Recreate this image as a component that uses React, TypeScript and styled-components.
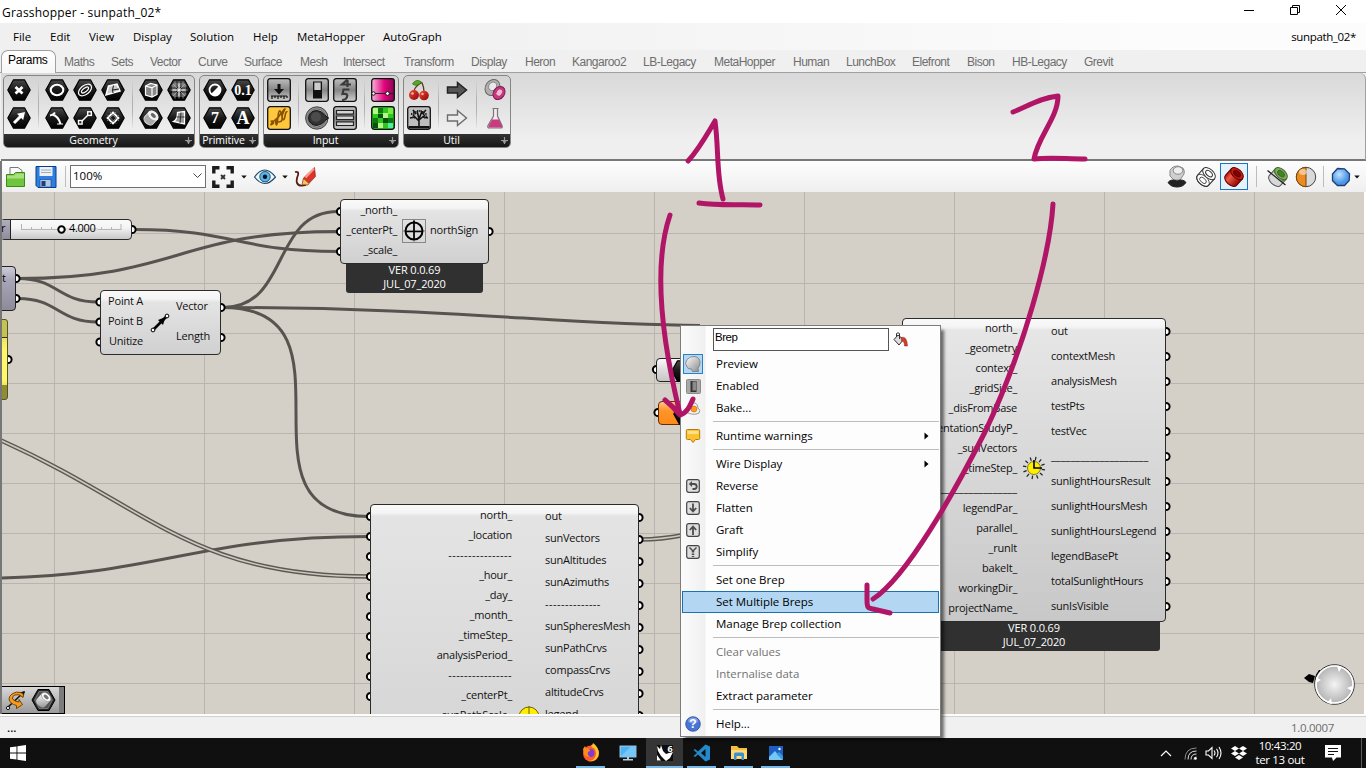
import React from 'react';
import styled, { createGlobalStyle, css } from 'styled-components';

const UI = "'Open Sans', 'Noto Sans', sans-serif";
const INK = '#b01566';

const Global = createGlobalStyle`
  * { box-sizing: border-box; }
  html, body { margin: 0; padding: 0; }
  body { width: 1366px; height: 768px; overflow: hidden; font-family: ${UI}; font-size: 11.5px; color: #000; background: #f0f0f0; }
  svg { display: block; }
`;

const Screen = styled.div`
  position: relative;
  width: 1366px;
  height: 768px;
  overflow: hidden;
  display: flex;
  flex-direction: column;
  > * { min-height: 0; }
`;

/* ---------- title and menu ---------- */
const TitleBar = styled.header`
  flex: 0 0 23px;
  display: flex;
  justify-content: space-between;
  background: #fff;
  padding: 0 19px 0 2px;
  font-size: 12px;
  line-height: 25px;
  letter-spacing: 0.2px;
  white-space: nowrap;
`;
const WindowButtons = styled.div`
  display: flex;
  gap: 34px;
  padding-top: 4px;
`;
const MenuBar = styled.nav`
  flex: 0 0 27px;
  display: flex;
  padding-left: 13px;
  background: linear-gradient(90deg, #f0f0f0 0, #f0f0f0 25%, #fcfcfc 85%);
  line-height: 28px;
`;
const MenuItem = styled.span<{ $w: number }>`
  flex: 0 0 ${p => p.$w}px;
  white-space: nowrap;
`;
const DocName = styled.span`
  margin-left: auto;
  padding-right: 10px;
  letter-spacing: -0.35px;
  white-space: nowrap;
`;

/* ---------- ribbon ---------- */
const TabRow = styled.div`
  flex: 0 0 23px;
  display: flex;
  padding-left: 1px;
  background: #f0f0f0;
  font-family: 'Liberation Sans', sans-serif;
  font-size: 12px;
  letter-spacing: -0.5px;
  color: #6e6e6e;
  border-bottom: 1px solid #a0a0a0;
`;
const ActiveTab = styled.span`
  flex: 0 0 55px;
  height: 23px;
  padding-left: 6px;
  line-height: 19px;
  letter-spacing: -0.3px;
  color: #000;
  background: linear-gradient(#fff, #f6f6f6);
  border: 1px solid #a0a0a0;
  border-bottom: 0;
  border-radius: 7px 7px 0 0;
`;
const Tab = styled.span<{ $w: number }>`
  flex: 0 0 ${p => p.$w}px;
  line-height: 24px;
  white-space: nowrap;
`;
const TabList = styled.div`
  display: flex;
  padding-left: 8px;
`;
const Ribbon = styled.div`
  flex: 0 0 88px;
  display: flex;
  gap: 4px;
  padding: 2px 0 0 2px;
  margin-left: 1px;
  background: linear-gradient(#d9d9d9, #efefef 78%);
  border-right: 1px solid #a0a0a0;
  border-bottom: 2px solid #777;
  border-top-right-radius: 6px;
`;
const Group = styled.section`
  height: 73px;
  display: flex;
  flex-direction: column;
  border: 1px solid #858585;
  border-radius: 5px;
  overflow: hidden;
  background: linear-gradient(#d3d3d3, #f0f0f0 80%);
`;
const GroupIcons = styled.div`
  flex: 0 0 58px;
  display: flex;
  padding: 0 1px;
`;
const IconGrid = styled.div`
  display: grid;
  grid-template-rows: 28px 28px;
  grid-auto-columns: 28px;
  grid-auto-flow: column;
  place-items: center;
`;
const GroupRule = styled.i`
  flex: 0 0 10px;
  display: flex;
  justify-content: center;
  &::after { content: ''; width: 1px; margin: 4px 0; background: linear-gradient(transparent, #b0b0b0 40%, #b0b0b0 60%, transparent); }
`;
const GroupLabel = styled.div`
  flex: 1;
  display: flex;
  justify-content: center;
  position: relative;
  background: linear-gradient(#333, #161616);
  color: #fff;
  font-size: 10.5px;
  letter-spacing: -0.05px;
  line-height: 12px;
  padding-right: 11px;
`;
const GroupPlus = styled.svg`
  position: absolute;
  right: 2px;
  top: 3px;
`;

/* ---------- toolbar ---------- */
const Toolbar = styled.div`
  flex: 0 0 31px;
  display: flex;
  align-items: center;
  padding: 0 4px 0 3px;
  border-left: 2px solid #777;
  background: linear-gradient(#fdfdfd, #efefef);
`;
const Combo = styled.div`
  width: 136px;
  height: 23px;
  display: flex;
  align-items: center;
  justify-content: space-between;
  margin-right: 3px;
  padding: 0 3px 2px 2px;
  background: #fff;
  border: 1px solid #707070;
`;
const ToolRule = styled.i<{ $l: number; $r: number }>`
  width: 1px;
  height: 21px;
  margin: 0 ${p => p.$r}px 0 ${p => p.$l}px;
  background: #bdbdbd;
`;
const Spacer = styled.div`flex: 1;`;
const Tool = styled.span<{ $w?: number; $on?: boolean }>`
  width: ${p => p.$w || 29}px;
  height: 27px;
  display: flex;
  align-items: center;
  justify-content: center;
  ${p => p.$on && css`width: 28px; border: 1px solid #1874c8; background: #e5f1fb;`}
`;

/* ---------- canvas ---------- */
const CanvasFrame = styled.main`
  flex: 0 0 522px;
  position: relative;
  overflow: hidden;
  border-left: 2px solid #777;
  border-right: 2px solid #fff;
  background-color: #d4d0c8;
  background-image:
    repeating-linear-gradient(90deg, transparent 0 52px, #b9b5ae 52px 53px, transparent 53px 150px),
    repeating-linear-gradient(180deg, transparent 0 41px, #b9b5ae 41px 42px, transparent 42px 50px);
`;
const Wires = styled.svg`
  position: absolute;
  left: 0;
  top: 0;
`;
const NodeBox = styled.div<{ $x: number; $y: number; $w: number; $h: number; $flat?: boolean }>`
  position: absolute;
  left: ${p => p.$x - 2}px;
  top: ${p => p.$y - 192}px;
  width: ${p => p.$w}px;
  height: ${p => p.$h}px;
  display: flex;
  border: 1px solid #2b2b2b;
  border-radius: 4px;
  background: linear-gradient(#fafafa 0, #f4f4f4 8px, #e6e6e6 11px, #c8c8c8);
  ${p => p.$flat && css`background: linear-gradient(#fafafa 0, #f4f4f4 8px, #e4e4e4 11px, #d0d0d0);`}
`;
const Inputs = styled.div<{ $w: number; $up?: boolean }>`
  flex: 0 0 ${p => p.$w}px;
  margin-top: ${p => (p.$up ? -1 : 0)}px;
  display: flex;
  flex-direction: column;
  align-items: flex-end;
`;
const Outputs = styled.div`
  display: flex;
  flex-direction: column;
  align-items: flex-start;
`;
const Port = styled.span<{ $h: number; $ls: number }>`
  flex: 0 0 ${p => p.$h}px;
  line-height: ${p => p.$h - 1}px;
  font-size: 11px;
  letter-spacing: ${p => p.$ls}px;
  color: #111;
  white-space: nowrap;
`;
const NodeIcon = styled.div<{ $w: number; $pt: number }>`
  flex: 0 0 ${p => p.$w}px;
  display: flex;
  justify-content: center;
  padding-top: ${p => p.$pt}px;
`;
const VersionTag = styled.div<{ $x: number; $y: number; $w: number }>`
  position: absolute;
  left: ${p => p.$x - 2}px;
  top: ${p => p.$y - 192}px;
  width: ${p => p.$w}px;
  height: 30px;
  border-radius: 0 0 3px 3px;
  background: #303030;
  color: #fff;
  font-size: 11px;
  letter-spacing: -0.15px;
  line-height: 14px;
  text-align: center;
  white-space: nowrap;
`;
const SliderName = styled.div`
  width: 10px;
  border-right: 1px solid #222;
  background: linear-gradient(#b0aebb, #8f8d9b);
  font-size: 11px;
  line-height: 16px;
`;
const SliderTrack = styled.div`
  flex: 1;
  display: flex;
  font-size: 11px;
  line-height: 17px;
`;
const YellowPanel = styled.div`
  position: absolute;
  left: -10px;
  top: 127px;
  width: 16px;
  height: 81px;
  border: 1px solid #55531f;
  border-radius: 3px;
  background: linear-gradient(#c4c252 0 17px, #33320f 17px 18px, #e9e466 18px, #fff76c 30px, #fff76c 60px, #eee75c 65px, #8f8c33 65px);
`;
const HalfNode = styled.div<{ $x: number; $y: number; $orange?: boolean }>`
  position: absolute;
  left: ${p => p.$x - 2}px;
  top: ${p => p.$y - 192}px;
  width: 50px;
  height: 24px;
  padding-left: 14px;
  border: 1px solid ${p => (p.$orange ? '#6b2a00' : '#222')};
  border-radius: 4px;
  background: ${p => (p.$orange ? 'linear-gradient(#ffc48a, #ff9429 40%, #fb8a1a)' : 'linear-gradient(#fafafa, #dedede 45%, #c6c6c6)')};
`;
const StubNode = styled.div`
  position: absolute;
  left: -10px;
  top: 74px;
  width: 24px;
  height: 45px;
  padding-left: 9px;
  border: 1px solid #222;
  border-radius: 4px;
  background: linear-gradient(#cfcdd9, #a8a6b6 30%, #8d8b9b);
  font-size: 11px;
  line-height: 21px;
`;
const Markov = styled.div`
  position: absolute;
  left: -1px;
  top: 494px;
  width: 64px;
  height: 28px;
  display: flex;
  align-items: center;
  gap: 5px;
  padding-left: 4px;
  border: 1px solid #000;
  background: linear-gradient(90deg, transparent 57px, #7c7c7c 57px), linear-gradient(#d8d8d8, #9a9a9a);
`;
const Compass = styled.svg`
  position: absolute;
  left: 1298px;
  top: 468px;
`;

/* ---------- status + taskbar ---------- */
const StatusBar = styled.footer`
  flex: 0 0 24px;
  display: flex;
  justify-content: space-between;
  padding: 0 32px 0 7px;
  border-top: 2px solid #fdfdfd;
  box-shadow: inset 0 1px 0 #d0d0d0;
  background: #f0f0f0;
  line-height: 24px;
  letter-spacing: -0.3px;
  color: #6d6d6d;
`;
const Dots = styled.span`
  color: #000;
  font-weight: 600;
  letter-spacing: 0;
`;
const Taskbar = styled.div`
  flex: 0 0 30px;
  display: flex;
  padding-left: 573px;
  background: #101010;
  position: relative;
  color: #fff;
`;
const StartButton = styled.div`
  position: absolute;
  left: 10px;
  top: 7px;
`;
const TaskApps = styled.div`
  display: flex;
  margin-left: -1px;
`;
const TaskApp = styled.div<{ $on?: boolean; $idle?: boolean }>`
  width: 37px;
  display: flex;
  justify-content: center;
  padding: 5px 0 0;
  background: ${p => (p.$on ? '#353535' : 'transparent')};
  box-shadow: ${p => (p.$idle ? 'none' : 'inset 0 -2px 0 #76b9ed')};
  ${p => !p.$on && css`width: 29px; margin: 0 4px;`}
`;
const Tray = styled.div`
  margin-left: auto;
  display: flex;
  align-items: center;
  padding-right: 4px;
`;
const TrayCell = styled.div<{ $w: number }>`
  width: ${p => p.$w}px;
  display: flex;
  justify-content: center;
`;
const Clock = styled.div`
  width: 56px;
  font-size: 11.5px;
  line-height: 14px;
  letter-spacing: -0.35px;
  text-align: center;
  white-space: nowrap;
`;
const ShowDesktop = styled.i`
  width: 1px;
  height: 30px;
  margin-left: 3px;
  background: #5a5a5a;
`;

/* ---------- context menu ---------- */
const Popup = styled.div`
  position: absolute;
  left: 680px;
  top: 325px;
  width: 261px;
  height: 412px;
  padding: 2px 1px;
  border: 1px solid #7c7c7c;
  background: linear-gradient(90deg, #fbfbfb 0, #f0f0f0 24px, #fdfdfd 25px);
  box-shadow: 4px 4px 3px -1px rgba(0, 0, 0, 0.55);
`;
const PopupSearch = styled.div`
  height: 25px;
  display: flex;
  padding: 0 0 0 31px;
  gap: 4px;
`;
const PopupInput = styled.div`
  width: 176px;
  height: 23px;
  padding-left: 1px;
  border: 1px solid #555;
  background: #fff;
  font-family: 'Liberation Sans', sans-serif;
  font-size: 11.5px;
  letter-spacing: -0.5px;
  line-height: 17px;
`;
const PopupRow = styled.div<{ $hot?: boolean; $off?: boolean }>`
  height: 22px;
  display: flex;
  align-items: center;
  padding-right: 10px;
  line-height: 20px;
  letter-spacing: -0.02px;
  color: ${p => (p.$off ? '#737373' : '#000')};
  ${p => p.$hot && css`background: #b3d7f3; box-shadow: inset 0 0 0 1px #1c72b0;`}
`;
const PopupGlyph = styled.span<{ $on?: boolean }>`
  flex: 0 0 20px;
  height: 20px;
  margin: 0 13px 0 1px;
  display: flex;
  align-items: center;
  justify-content: center;
  ${p => p.$on && css`background: #b3d7f3; border: 1px solid #2a80c4;`}
`;
const PopupText = styled.span`
  flex: 1;
  white-space: nowrap;
`;
const PopupRule = styled.i`
  display: block;
  height: 6px;
  margin-left: 31px;
  background: linear-gradient(transparent 2px, #bdbdbd 2px 3px, transparent 3px);
`;
const Ink = styled.svg`
  position: absolute;
  left: 0;
  top: 0;
  pointer-events: none;
`;

/* ---------- ribbon icons ---------- */
const DefsSvg = styled.svg`
  position: absolute;
`;
const Defs = () => (
  <DefsSvg width="0" height="0">
    <defs>
      <linearGradient id="hex" x1="0" y1="0" x2="0" y2="1"><stop offset="0" stopColor="#4a4a4a" /><stop offset=".5" stopColor="#181818" /><stop offset="1" stopColor="#000" /></linearGradient>
      <linearGradient id="steel" x1="0" y1="0" x2="0" y2="1"><stop offset="0" stopColor="#bdbdbd" /><stop offset=".5" stopColor="#868686" /><stop offset="1" stopColor="#d0d0d0" /></linearGradient>
      <linearGradient id="pink" x1="0" y1="0" x2="1" y2="0"><stop offset="0" stopColor="#f7b6da" /><stop offset=".55" stopColor="#e2057c" /><stop offset="1" stopColor="#8b0450" /></linearGradient>
      <linearGradient id="red" x1="0" y1="0" x2="1" y2="1"><stop offset="0" stopColor="#f0483a" /><stop offset="1" stopColor="#8e0500" /></linearGradient>
      <linearGradient id="redtube" x1="0" y1="0" x2="1" y2="0"><stop offset="0" stopColor="#c01008" /><stop offset=".3" stopColor="#ee5a48" /><stop offset="1" stopColor="#8e0500" /></linearGradient>
      <linearGradient id="tube" x1="0" y1="0" x2="1" y2="1"><stop offset="0" stopColor="#fff" /><stop offset="1" stopColor="#8a8a8a" /></linearGradient>
      <radialGradient id="knob"><stop offset="0" stopColor="#f4f4f4" /><stop offset="1" stopColor="#b0b0b0" /></radialGradient>
      <radialGradient id="ball" cx=".4" cy=".35"><stop offset="0" stopColor="#bfe2ff" /><stop offset="1" stopColor="#4f97e6" /></radialGradient>
    </defs>
  </DefsSvg>
);

const Hex = ({ children }: { children?: React.ReactNode }) => (
  <svg width="24" height="24" viewBox="0 0 24 24">
    <path d="M6.5 1.8h11L23.2 12l-5.7 10.2h-11L.8 12z" fill="url(#hex)" stroke="#000" strokeWidth="1.2" strokeLinejoin="round" />
    <g fill="none" stroke="#fff" strokeWidth="1.8">{children}</g>
  </svg>
);
const Tile = ({ fill, children }: { fill: string; children?: React.ReactNode }) => (
  <svg width="24" height="24" viewBox="0 0 24 24">
    <rect x=".7" y=".7" width="22.6" height="22.6" rx="2.5" fill={fill} stroke="#111" strokeWidth="1.3" />
    {children}
  </svg>
);
const Plain = ({ children }: { children?: React.ReactNode }) => (
  <svg width="24" height="24" viewBox="0 0 24 24">{children}</svg>
);

const GeometryIcons = () => (
  <>
    <IconGrid>
      <Hex><path d="M8.5 9l7 6.5M15.5 9l-7 6.5" strokeWidth="2.8" /></Hex>
      <Hex><path d="M7 17l6.500-6.500" strokeWidth="3" /><path d="M18 6l-1.800 8-6.200-6.200z" fill="#fff" stroke="none" /></Hex>
    </IconGrid>
    <GroupRule />
    <IconGrid>
      <Hex><ellipse cx="12" cy="12" rx="6.300" ry="5.200" strokeWidth="2.100" /></Hex>
      <Hex><path d="M10 6.500q-1.500 2.500-5 3M7 8.500q6 1 8.500 9.500" strokeWidth="2" /><path d="M12 18h6" strokeWidth="1.200" /></Hex>
      <Hex><g transform="rotate(-38 12 12)"><ellipse cx="12" cy="12" rx="7.500" ry="4.500" strokeWidth="1.200" /><ellipse cx="12" cy="12" rx="4.200" ry="1.800" strokeWidth="1.200" /></g></Hex>
      <Hex><path d="M8 16l8-8" strokeWidth="1.500" /><rect x="5.500" y="14.500" width="3.600" height="3.600" fill="#222" strokeWidth="1.400" /><rect x="14.700" y="5.800" width="3.600" height="3.600" fill="#222" strokeWidth="1.400" /></Hex>
      <Hex><path d="M7.500 8l8.500-1.800 3 6.800L5 17z" fill="#ccc" strokeWidth="1.500" /><path d="M12.500 7.500l-1 4.500 6.500-1M11.500 12l.5 3" stroke="#222" strokeWidth="1.100" /></Hex>
      <Hex><path d="M12 6.500l5.500 5.500-5.500 5.500L6.500 12z" strokeWidth="1.800" /><path d="M6 8.500l9 9M9 6l9 9M15 6l-9 9M18 9l-9 9" stroke="#999" strokeWidth=".7" /></Hex>
    </IconGrid>
    <GroupRule />
    <IconGrid>
      <Hex><path d="M6.500 8l5-2.500 6.500 1.500v9.500l-5 2.500-6.500-2z" fill="#888" strokeWidth="1.200" /><path d="M6.500 8l6.500 1.800V19M13 9.800l5-2.800" strokeWidth="1.200" /></Hex>
      <Hex><g transform="rotate(42 12 12)"><path d="M6.500 8.500v7a5.500 3.500 0 0 0 11 0v-7z" fill="#aaa" stroke="#ddd" strokeWidth="1" /><ellipse cx="12" cy="8.500" rx="5.500" ry="3.500" fill="#eee" strokeWidth="1" /><ellipse cx="12" cy="8.500" rx="3" ry="1.700" fill="#666" stroke="none" /></g></Hex>
      <Hex><path d="M6 6h12v12H6zM12 3.500v17M3.500 12h17M6 6l12 12M18 6L6 18M8 3.500v17M16 3.500v17M4.500 8h15M4.500 16h15" stroke="#bbb" strokeWidth=".7" /><path d="M12 5.500v13M5.500 12h13" strokeWidth="1" /></Hex>
      <Hex><path d="M10.500 6.500l7-1V18L6.500 15.500q4-2 4-9z" fill="#999" strokeWidth="1.300" /><path d="M14 6.500L13 17M9.500 11h8" stroke="#333" strokeWidth="1" /></Hex>
    </IconGrid>
  </>
);

const HexText = ({ t, s }: { t: string; s: number }) => (
  <Hex><text x="12" y={12 + s * 0.34} textAnchor="middle" fontFamily="'Liberation Serif', serif" fontWeight="700" fontSize={s} fill="#fff" stroke="none">{t}</text></Hex>
);

const PrimitiveIcons = () => (
  <IconGrid>
    <Hex><circle cx="12" cy="12" r="5.500" /><path d="M16 8a5.600 5.600 0 1 1-8 8z" fill="#fff" stroke="none" /></Hex>
    <HexText t="7" s={16} />
    <HexText t="0.1" s={14} />
    <HexText t="A" s={18} />
  </IconGrid>
);

const InputIcons = () => (
  <>
    <IconGrid>
      <Tile fill="url(#steel)"><path d="M10.500 6h3v5H17l-5 5.500L7 11h3.500z" fill="#111" /><path d="M4 18h16M5 18v3M8 18v2M11 18v3M14 18v2M17 18v3M20 18v2" stroke="#111" strokeWidth="1.200" /></Tile>
      <Tile fill="#ffc83c"><path d="M3.500 15.500q2.500-1 3 .5t-2 2.500 3.500-4.500 3-2.500-2 6.500 2-7 3.500-3-2.500 8 1.500-8 3.500-3-1.500 8 2.500-3 2.500-4" fill="none" stroke="#8a5200" strokeWidth="1.600" /></Tile>
    </IconGrid>
    <GroupRule />
    <IconGrid>
      <Tile fill="url(#steel)"><rect x="8" y="3.500" width="9" height="17" fill="#111" /><rect x="9.300" y="4.500" width="6.400" height="7.500" fill="#ccc" /></Tile>
      <Plain><circle cx="11.800" cy="12" r="11.200" fill="#8f8f8f" stroke="#444" /><circle cx="11.800" cy="12" r="9" fill="#bdbdbd" stroke="#555" strokeWidth=".7" /><path d="M11 4.600q5.500 0 8.500 4.400l4 3-4 3q-3 4.400-8.500 4.400a7.400 7.400 0 0 1 0-14.800z" fill="#333" stroke="#111" /><circle cx="11" cy="11" r="5" fill="#4c4c4c" /></Plain>
      <Tile fill="url(#steel)"><path d="M14.500 1.500L9 6.500h9M14.500 2v7M16.500 11.500h-6l-1 4.500q6-1 4.500 3-1 3-5 3" stroke="#3a3a3a" strokeWidth="2.200" fill="none" /></Tile>
      <Tile fill="url(#steel)"><path d="M3.500 4.500h17v3.600h-17zM3.500 10h17v3.600h-17zM3.500 15.800h17v3.700h-17z" fill="#d6d6d6" stroke="#222" strokeWidth="1.200" /></Tile>
    </IconGrid>
    <GroupRule />
    <IconGrid>
      <Tile fill="url(#pink)"><path d="M1 15.500h22" stroke="#222" strokeWidth="1.200" /><circle cx="2.500" cy="15.500" r="1.700" fill="#fff" stroke="#111" /><circle cx="16.500" cy="15.500" r="1.900" fill="#fff" stroke="#111" /></Tile>
      <Tile fill="#2cc81e"><path d="M2 2h5v6H2zM12 7h5v5h-5zM7 17h5v5H7z" fill="#b8f58a" /><path d="M7 2h5v5H7zM2 12h5v5H2zM17 12h5v5h-5z" fill="#0e7a12" /><path d="M12 12h5v5h-5zM2 17h5v5H2zM7 8h5v4H7z" fill="#0a5010" /><path d="M17 2h5v6h-5z" fill="#7be84a" /><path d="M17 17h5v5h-5z" fill="#4ff0a0" /></Tile>
    </IconGrid>
  </>
);

const ARROW = 'M2.500 9h10V4.500L21.500 12l-9 7.500V15h-10z';
const UtilIcons = () => (
  <>
    <IconGrid>
      <Plain><path d="M15 4.500Q8 8 7 13M15 4.500q2 5 2 9" stroke="#5c3b12" fill="none" strokeWidth="1.300" /><path d="M14.500 4Q9 0 5.500 6q5 3.500 9-2z" fill="#58a827" stroke="#2d6512" strokeWidth=".7" /><circle cx="7" cy="17" r="5" fill="url(#red)" /><circle cx="17" cy="17.500" r="4.800" fill="url(#red)" /><circle cx="5.500" cy="15.500" r="1.300" fill="#ffb3a8" /><circle cx="15.500" cy="16" r="1.200" fill="#ffb3a8" /></Plain>
      <Tile fill="#bdbdbd"><path d="M1.500 20h21v2.500h-21z" fill="#111" /><path d="M12 21v-8M12 15L6 9M12 14l6-5M12 13l-2-8M12 13l3-8M8 11L3 12M16 11l5 1M9 8L6 4M15 8l4-4" stroke="#111" strokeWidth="1.600" /><path d="M4 8h4M16 8h4M10 5h5M6 6h3M15 6h3M5 11l3 1M17 12l3-2" stroke="#222" strokeWidth="1.800" strokeDasharray="1.400 .8" /></Tile>
    </IconGrid>
    <GroupRule />
    <IconGrid>
      <Plain><path d={ARROW} fill="#555" stroke="#222" strokeWidth="1.500" /></Plain>
      <Plain><path d={ARROW} fill="#ececec" stroke="#6c6c6c" strokeWidth="1.400" /></Plain>
    </IconGrid>
    <GroupRule />
    <IconGrid>
      <Plain><g transform="rotate(35 9.500 9.500)"><ellipse cx="9.500" cy="9.500" rx="7" ry="8.500" fill="#b0b0b0" stroke="#666" /><ellipse cx="9" cy="8.500" rx="3.800" ry="4.500" fill="#e9e9e9" stroke="#777" strokeWidth=".7" /></g><g transform="rotate(35 16 15)"><ellipse cx="16" cy="15" rx="5.500" ry="7" fill="#c9387f" stroke="#7d1a4c" /><ellipse cx="16" cy="14.500" rx="3" ry="4" fill="#f8b6d4" stroke="#a32968" strokeWidth=".8" /></g></Plain>
      <Plain><path d="M9.500 2.500h6M10.500 3v7L5 19.500q-1 2.500 1.500 2.500h11q2.500 0 1.500-2.500L14.500 10V3" fill="#f6e6ee" stroke="#777" strokeWidth="1.200" /><path d="M9 13.500h7l3 6.500q.5 1.500-1.500 1.500H7q-2 0-1.500-1.500z" fill="#c93a80" /></Plain>
    </IconGrid>
  </>
);

const RibbonGroup = ({ name, children }: { name: string; children: React.ReactNode }) => (
  <Group>
    <GroupIcons>{children}</GroupIcons>
    <GroupLabel>
      {name}
      <GroupPlus width="7" height="7" viewBox="0 0 7 7"><path d="M3.500 0v7M0 3.500h7" stroke="#999" strokeWidth="1.200" /><path d="M1.500 4l2 3 2-3z" fill="#999" /></GroupPlus>
    </GroupLabel>
  </Group>
);

/* ---------- toolbar icons ---------- */
const Caret = () => <svg width="6" height="4" viewBox="0 0 6 4"><path d="M.3.500h5.400L3 3.500z" fill="#111" /></svg>;

const Cylinder = ({ kind }: { kind: 'wire' | 'red' | 'green' }) => {
  const body = { wire: '#fff', red: 'url(#redtube)', green: '#d8d8d8' }[kind];
  const line = { wire: '#333', red: '#5e0200', green: '#555' }[kind];
  const cap = { wire: '#fff', red: '#c81b12', green: '#6fbe35' }[kind];
  const hole = { wire: '#fff', red: '#7e0400', green: '#3b8a18' }[kind];
  return (
    <svg width="24" height="24" viewBox="0 0 24 24">
      <g transform="rotate(42 12 12)" stroke={line}>
        <path d="M4.500 7.500v9a7.500 4.500 0 0 0 15 0v-9z" fill={body} />
        {kind === 'wire' && <><ellipse cx="12" cy="16.500" rx="7.500" ry="4.500" fill="none" strokeWidth=".8" /><ellipse cx="12" cy="16.500" rx="4" ry="2.300" fill="none" strokeWidth=".8" /></>}
        {kind === 'green' && <path d="M5 8v3.500l14 1V8z" fill="#4f9e22" stroke="none" />}
        <ellipse cx="12" cy="7.500" rx="7.500" ry="4.500" fill={cap} />
        <ellipse cx="12" cy="7.500" rx="4" ry="2.300" fill={hole} />
      </g>
      {kind === 'green' && <path d="M1.500 5.500L19.500 20" stroke="#222" strokeWidth="1.300" />}
    </svg>
  );
};

/* ---------- canvas data ---------- */
const sunInputs = ['north_', '_location', '----------------', '_hour_', '_day_', '_month_', '_timeStep_', 'analysisPeriod_', '----------------', '_centerPt_', '_sunPathScale_'];
const sunOutputs = ['out', 'sunVectors', 'sunAltitudes', 'sunAzimuths', '--------------', 'sunSpheresMesh', 'sunPathCrvs', 'compassCrvs', 'altitudeCrvs', 'legend'];
const hrsInputs = ['north_', '_geometry', 'context_', '_gridSize_', '_disFromBase', 'orientationStudyP_', '_sunVectors', '_timeStep_', '____________________', 'legendPar_', 'parallel_', '_runIt', 'bakeIt_', 'workingDir_', 'projectName_'];
const hrsOutputs = ['out', 'contextMesh', 'analysisMesh', 'testPts', 'testVec', '____________________', 'sunlightHoursResult', 'sunlightHoursMesh', 'sunlightHoursLegend', 'legendBasePt', 'totalSunlightHours', 'sunIsVisible'];

const spacing = (t: string) => (t.startsWith('--') ? 0.45 : t.startsWith('__') ? 0.05 : -0.23);
const Ports = ({ names, h }: { names: string[]; h: number }) => (
  <>{names.map((t, i) => <Port key={i} $h={h} $ls={spacing(t)}>{t}</Port>)}</>
);

const seq = (x: number, y: number, step: number, n: number) => Array.from({ length: n }, (_, i) => [x, y + i * step]);
const ports = [
  [132, 229.5], [16, 278.5], [16, 298.5], [8, 359.5],
  ...seq(100, 302, 20, 3), [221, 307.5], [221, 337.5],
  ...seq(340.5, 211.5, 20, 3), [489, 231.5],
  ...seq(370.5, 516.5, 20, 10), ...seq(639, 517.5, 22, 10),
  ...seq(1166, 331.5, 25, 12),
  [656.5, 369.5], [658, 412.5],
];
const wires = [
  'M134 229.5C236 229.5 236 251.5 338 251.5',
  'M18 278.5C178 278.5 178 231.5 338 231.5',
  'M18 278.5C58 278.5 58 302 98 302',
  'M18 298.5C58 298.5 58 322 98 322',
  'M223 307.5C290 307.5 271 211.5 338 211.5',
  'M223 307.5C450 307.5 560 325 700 325.5',
  'M223 307.5C369 307.5 223 516.5 369 516.5',
  'M2 578C160 574 200 536.5 369 536.5',
];
const doubleWires = ['M0 440C150 507 190 576.5 369 576.5', 'M641 539.5C657 539.5 668 538 684 535'];

const Drawing = () => (
  <Wires width="1362" height="522" viewBox="2 192 1362 522">
    <g fill="none" stroke="#57544f" strokeWidth="3">{wires.map(d => <path key={d} d={d} />)}</g>
    <g fill="none">{doubleWires.map(d => <g key={d}><path d={d} stroke="#5c5953" strokeWidth="4.5" /><path d={d} stroke="#cdc9c1" strokeWidth="1.6" /></g>)}</g>
    <g fill="#fff" stroke="#000" strokeWidth="2">{ports.map(([x, y]) => <circle key={`${x}-${y}`} cx={x} cy={y} r="3.6" />)}</g>
  </Wires>
);

const Rays = () => (
  <svg width="24" height="24" viewBox="0 0 24 24">
    {Array.from({ length: 12 }, (_, i) => <path key={i} d="M12 .8v3.400" stroke="#222" strokeWidth="1.2" transform={`rotate(${i * 30 + 10} 12 12)`} />)}
    <circle cx="12" cy="12" r="6.500" fill="#ffee00" stroke="#6b6400" strokeWidth=".8" />
    <path d="M12 4v8h8" fill="none" stroke="#000" strokeWidth="1.600" />
  </svg>
);

/* ---------- context menu ---------- */
const Box = ({ children }: { children: React.ReactNode }) => (
  <svg width="14" height="14" viewBox="0 0 14 14"><rect x=".7" y=".7" width="12.600" height="12.600" rx="2" fill="#dedede" stroke="#444" strokeWidth="1.200" /><g fill="none" stroke="#4c4c4c" strokeWidth="1.800">{children}</g></svg>
);
const glyphs: Record<string, React.ReactNode> = {
  Preview: <svg width="18" height="18" viewBox="0 0 18 18"><path d="M3 4.500Q6 1 11 1.500q5 1 5 6.500 0 3-2 5l.5 3.500H8.500l-1-2.500q-4 .500-4.500-2.500L1.500 8.500z" fill="url(#tube)" stroke="#777" strokeWidth=".8" /></svg>,
  Enabled: <svg width="15" height="15" viewBox="0 0 15 15"><rect x=".5" y=".5" width="14" height="14" rx="1" fill="#a8a8a8" stroke="#8a8a8a" /><rect x="4.500" y="2" width="6" height="11" fill="#333" /><rect x="6.500" y="2.500" width="3.500" height="9" fill="#8a8a8a" /></svg>,
  'Bake...': <svg width="16" height="16" viewBox="0 0 16 16"><path d="M1 12q-1-4 4-5 1-5 5-4 3 1 3 5 3 2 1 5-6 3-13-1z" fill="#f4f4f4" stroke="#999" /><circle cx="9" cy="9" r="3" fill="#ff9a1f" stroke="#c86400" strokeWidth=".6" /></svg>,
  'Runtime warnings': <svg width="16" height="16" viewBox="0 0 16 16"><path d="M2.500 1.500h11q1.200 0 1.200 1.200v7.600q0 1.200-1.200 1.200h-3L8 14.500l-2.500-3h-3q-1.200 0-1.200-1.200V2.700q0-1.200 1.200-1.200z" fill="#ffc22e" stroke="#b07d10" /><path d="M2.500 3h11v3h-11z" fill="#ffe08a" /></svg>,
  Reverse: <Box><path d="M5 5h3.200a2.400 2.400 0 0 1 0 5H6.500" /><path d="M6 2L2.800 5 6 8z" fill="#4c4c4c" stroke="none" /></Box>,
  Flatten: <Box><path d="M7 2.500v7M3.800 7L7 10.500 10.200 7" /></Box>,
  Graft: <Box><path d="M7 12V5M3.800 7L7 3.500 10.200 7" /></Box>,
  Simplify: <Box><path d="M3.500 2.500L7 6l3.500-3.500" strokeWidth="1.500" /><path d="M7 6v6" strokeDasharray="1.500 1" strokeWidth="2.500" /></Box>,
  'Help...': <svg width="16" height="16" viewBox="0 0 16 16"><circle cx="8" cy="8" r="7.300" fill="#4a74d4" stroke="#2a4a9c" strokeWidth=".8" /><ellipse cx="8" cy="4.500" rx="5" ry="3" fill="#9db8f3" opacity=".6" /><text x="8" y="12.300" fontSize="12" fontWeight="700" textAnchor="middle" fill="#fff" fontFamily="'Liberation Sans', sans-serif">?</text></svg>,
};
const entries = ['Preview', 'Enabled', 'Bake...', '', 'Runtime warnings', '', 'Wire Display', 'Reverse', 'Flatten', 'Graft', 'Simplify', '', 'Set one Brep', 'Set Multiple Breps', 'Manage Brep collection', '', 'Clear values', 'Internalise data', 'Extract parameter', '', 'Help...'];

const ContextMenu = () => (
  <Popup>
    <PopupSearch>
      <PopupInput>Brep</PopupInput>
      <svg width="16" height="24" viewBox="0 0 16 24"><path d="M1 11.500l4-4.500 5.500 4.500L6 17z" fill="#ddd" stroke="#333" /><path d="M3.500 9V5.500q1.500-1.500 3 0V11" fill="none" stroke="#333" /><path d="M8 9.500q6-2 6.500 8.500h-3q0-5-3-5z" fill="#cf3d2c" stroke="#8e2418" strokeWidth=".5" /></svg>
    </PopupSearch>
    {entries.map((t, i) => t === '' ? <PopupRule key={i} /> : (
      <PopupRow key={i} $hot={t === 'Set Multiple Breps'} $off={t === 'Clear values' || t === 'Internalise data'}>
        <PopupGlyph $on={t === 'Preview'}>{glyphs[t]}</PopupGlyph>
        <PopupText>{t}</PopupText>
        {(t === 'Runtime warnings' || t === 'Wire Display') && <svg width="5" height="8" viewBox="0 0 5 8"><path d="M.5.500L4.500 4l-4 3.500z" fill="#000" /></svg>}
      </PopupRow>
    ))}
  </Popup>
);

/* ---------- page ---------- */
const menus: [string, number][] = [['File', 37], ['Edit', 39], ['View', 44], ['Display', 57], ['Solution', 63], ['Help', 44], ['MetaHopper', 86], ['AutoGraph', 70]];
const tabs: [string, number][] = [['Maths', 47], ['Sets', 39], ['Vector', 48], ['Curve', 46], ['Surface', 56], ['Mesh', 43], ['Intersect', 61], ['Transform', 67], ['Display', 54], ['Heron', 47], ['Kangaroo2', 71], ['LB-Legacy', 71], ['MetaHopper', 79], ['Human', 53], ['LunchBox', 66], ['Elefront', 55], ['Bison', 45], ['HB-Legacy', 72], ['Grevit', 40]];

export default function App() {
  return (
    <Screen>
      <Global />
      <Defs />
      <TitleBar>
        <span>Grasshopper - sunpath_02*</span>
        <WindowButtons>
          <svg width="12" height="12" viewBox="0 0 12 12"><path d="M1 6.500h10" stroke="#000" /></svg>
          <svg width="12" height="12" viewBox="0 0 12 12"><path d="M1.500 3.500h7v7h-7zM3.500 3.500v-2h7v7h-2" fill="none" stroke="#000" /></svg>
          <svg width="12" height="12" viewBox="0 0 12 12"><path d="M1 1l10 10M11 1L1 11" stroke="#000" /></svg>
        </WindowButtons>
      </TitleBar>
      <MenuBar>
        {menus.map(([t, w]) => <MenuItem key={t} $w={w}>{t}</MenuItem>)}
        <DocName>sunpath_02*</DocName>
      </MenuBar>
      <TabRow>
        <ActiveTab>Params</ActiveTab>
        <TabList>{tabs.map(([t, w]) => <Tab key={t} $w={w}>{t}</Tab>)}</TabList>
      </TabRow>
      <Ribbon>
        <RibbonGroup name="Geometry"><GeometryIcons /></RibbonGroup>
        <RibbonGroup name="Primitive"><PrimitiveIcons /></RibbonGroup>
        <RibbonGroup name="Input"><InputIcons /></RibbonGroup>
        <RibbonGroup name="Util"><UtilIcons /></RibbonGroup>
      </Ribbon>
      <Toolbar>
        <Tool $w={22}><svg width="22" height="22" viewBox="0 0 22 22"><path d="M5 1.500h8l4 3V15H5z" fill="#fafafa" stroke="#777" /><path d="M1.500 8.500h7l2-2h9v14h-18z" fill="#6fc63c" stroke="#3c8a17" /><path d="M2 9.500h7l2-2h8v5H2z" fill="#a7e07c" /></svg></Tool>
        <Tool $w={38}><svg width="22" height="22" viewBox="0 0 22 22"><path d="M1 .500h20v21H3l-2-2z" fill="#2f7fe0" stroke="#0b3c8c" /><path d="M4.500 1h13v9h-13z" fill="#e9f1fb" /><path d="M6 4h10M6 6.500h10" stroke="#aaa" /><path d="M5 13.500h11V21H5z" fill="#b4c7e2" stroke="#0b3c8c" strokeWidth=".6" /><path d="M6.500 15h4v5h-4z" fill="#183f7c" /></svg></Tool>
        <ToolRule $l={0} $r={4} />
        <Combo>100%<svg width="9" height="6" viewBox="0 0 9 6"><path d="M.500.500l4 4 4-4" fill="none" stroke="#444" /></svg></Combo>
        <Tool $w={28}><svg width="22" height="22" viewBox="0 0 22 22"><path d="M1.800 7.500V1.800h5.700M14.500 1.800h5.700v5.700M20.200 14.500v5.700h-5.700M7.500 20.200H1.800v-5.700" fill="none" stroke="#1c1c1c" strokeWidth="3.400" /><path d="M9 9l4 4M13 9l-4 4" stroke="#333" strokeWidth="1.800" /></svg></Tool>
        <Tool $w={13}><Caret /></Tool>
        <Tool $w={30}><svg width="22" height="16" viewBox="0 0 22 16"><path d="M.500 8q10-14 21 0-11 13-21 0z" fill="#eaf5fc" stroke="#234a66" strokeWidth="1.200" /><circle cx="11" cy="7.700" r="5.200" fill="#5cb4e6" stroke="#17557f" /><circle cx="11" cy="7.700" r="2.200" fill="#06121c" /></svg></Tool>
        <Tool $w={9}><Caret /></Tool>
        <Tool $w={32}><svg width="22" height="20" viewBox="0 0 22 20"><path d="M1 5q4-1 3 3-2 5-1 8 2 4 9 2" fill="none" stroke="#5c1c10" strokeWidth="1.800" /><path d="M20.500.500l1 9-8 8.500-5-1 1-6z" fill="#d9352b" stroke="#8a150c" strokeWidth=".6" /><path d="M9.500 11.500L8 17.500l6 .5 1-1.500z" fill="#f4c55e" stroke="#6b3b10" strokeWidth=".5" /><path d="M20 1.500l-8.500 9" stroke="#ff9a8e" strokeWidth="2" /></svg></Tool>
        <Spacer />
        <Tool><svg width="22" height="24" viewBox="0 0 22 24"><path d="M4 5.500Q6 1 12 1l5 2q2 3 1 6l-4 6H8L4 11z" fill="#cfcfcf" stroke="#888" /><ellipse cx="12" cy="5.500" rx="4.800" ry="3.800" fill="#eee" stroke="#888" /><path d="M2 17.500q3-4 9-1.500 6-2.500 9 1.500-3 4.500-9 4.500t-9-4.500z" fill="#222" stroke="#222" /></svg></Tool>
        <Tool><Cylinder kind="wire" /></Tool>
        <Tool $on><Cylinder kind="red" /></Tool>
        <ToolRule $l={8} $r={7} />
        <Tool $w={28}><Cylinder kind="green" /></Tool>
        <Tool $w={28}><svg width="22" height="22" viewBox="0 0 22 22"><circle cx="11" cy="11" r="9.700" fill="#d9d9d9" stroke="#444" /><path d="M11 1.300a9.700 9.700 0 0 0 0 19.400z" fill="#ec8b22" stroke="#7a4208" /><ellipse cx="8" cy="6" rx="4" ry="3" fill="#fff" opacity=".5" /></svg></Tool>
        <ToolRule $l={3} $r={6} />
        <Tool $w={21}><svg width="20" height="20" viewBox="0 0 20 20"><path d="M6.500 1.500L13.500 1.800l5 5-.3 6.700-4.700 5H6.500l-5-4.800V7z" fill="url(#ball)" stroke="#1c3f78" strokeWidth="1.300" /></svg></Tool>
        <Tool $w={11}><Caret /></Tool>
      </Toolbar>

      <CanvasFrame>
        <Drawing />
        <NodeBox $x={0} $y={219} $w={132} $h={21}>
          <SliderName>r</SliderName>
          <SliderTrack><svg width="120" height="19" viewBox="11 220 120 19"><path d="M21 229.500h100M21.500 224v6M31.500 227v3M41.500 227v3M51.500 227v3M101.500 227v3M111.500 227v3M121 224v6" stroke="#b5b5b5" /><path d="M66 229.500h32" stroke="#dedede" strokeWidth="3" /><circle cx="61.500" cy="229.500" r="3.200" fill="#fff" stroke="#000" strokeWidth="2" /><text x="69" y="232" fontSize="11" letterSpacing="-.3" fontFamily={UI}>4.000</text></svg></SliderTrack>
        </NodeBox>
        <StubNode>t</StubNode>
        <YellowPanel />

        <NodeBox $x={100} $y={290} $w={121} $h={65} $flat>
          <Inputs $w={42}><Ports names={['Point A', 'Point B', 'Unitize']} h={20} /></Inputs>
          <NodeIcon $w={33} $pt={22}><svg width="20" height="20" viewBox="0 0 20 20"><path d="M3 17L17 3" stroke="#000" strokeWidth="2.600" /><path d="M15.500 4l-2.500 8-5-5z" fill="#000" /><circle cx="3" cy="17" r="1.900" fill="#fff" stroke="#000" /><circle cx="17" cy="3" r="1.900" fill="#fff" stroke="#000" /></svg></NodeIcon>
          <Outputs><Ports names={['Vector', 'Length']} h={30} /></Outputs>
        </NodeBox>

        <VersionTag $x={346} $y={263} $w={137}>VER 0.0.69<br />JUL_07_2020</VersionTag>
        <NodeBox $x={340} $y={199} $w={149} $h={65} $flat>
          <Inputs $w={56}><Ports names={['_north_', '_centerPt_', '_scale_']} h={20} /></Inputs>
          <NodeIcon $w={33} $pt={19}><svg width="24" height="24" viewBox="0 0 24 24"><rect x=".5" y=".5" width="23" height="23" fill="none" stroke="#888" /><path d="M0 12h24M12 0v24" stroke="#888" /><circle cx="12" cy="12" r="8.500" fill="none" stroke="#000" strokeWidth="2" /><path d="M12 1.500v11M4 12.500h16M12 12v8" stroke="#000" strokeWidth="1.700" /></svg></NodeIcon>
          <Outputs><Ports names={['northSign']} h={61} /></Outputs>
        </NodeBox>

        <NodeBox $x={370} $y={504} $w={269} $h={320} $flat>
          <Inputs $w={141}><Ports names={sunInputs} h={20} /></Inputs>
          <NodeIcon $w={33} $pt={201}><svg width="22" height="22" viewBox="0 0 22 22"><circle cx="11" cy="11" r="10" fill="#ffee00" stroke="#6b6400" /><path d="M11 0v22" stroke="#6b6400" /></svg></NodeIcon>
          <Outputs><Ports names={sunOutputs} h={22} /></Outputs>
        </NodeBox>

        <HalfNode $x={656} $y={358}><Hex /></HalfNode>
        <HalfNode $x={658} $y={401} $orange><Hex /></HalfNode>

        <VersionTag $x={908} $y={621} $w={252}>VER 0.0.69<br />JUL_07_2020</VersionTag>
        <NodeBox $x={902} $y={318} $w={264} $h={304}>
          <Inputs $w={114} $up><Ports names={hrsInputs} h={20} /></Inputs>
          <NodeIcon $w={34} $pt={137}><Rays /></NodeIcon>
          <Outputs><Ports names={hrsOutputs} h={25} /></Outputs>
        </NodeBox>

        <Markov>
          <svg width="20" height="20" viewBox="0 0 20 20"><path d="M1 18L18 2" stroke="#111" strokeWidth="1.500" /><path d="M19 1l-6 1.500L17.500 7z" fill="#111" /><path d="M6 4q4-3 9-1.500 4 2 2 5l-2-1.500Q14 4 9 5q-3 1-2.500 4 3 3 6.500 3V9.500l3.500 5-6 4v-3Q4 14 3 9q0-3 3-5z" fill="#f59a1b" stroke="#6b3900" strokeWidth=".9" /><circle cx="2" cy="18" r="1.600" fill="#fff" stroke="#111" /></svg>
          <svg width="25" height="24" viewBox="0 0 24 24"><path d="M6.500 1.500h11L23.500 12l-6 10.500h-11L.500 12z" fill="#222" stroke="#000" /><path d="M7.500 3.500h9L21 12l-4.500 8.500h-9L3 12z" fill="#555" stroke="#999" strokeWidth=".6" /><g transform="rotate(42 12 12)"><path d="M6.500 8v8a5.500 3.500 0 0 0 11 0V8z" fill="url(#tube)" /><ellipse cx="12" cy="8" rx="5.500" ry="3.500" fill="#fff" stroke="#888" strokeWidth=".6" /><ellipse cx="12" cy="8" rx="3" ry="1.700" fill="#777" /></g></svg>
        </Markov>
        <Compass width="60" height="50" viewBox="1300 660 60 50">
          <path d="M1319 670q-7 8-3 19l4-1v-18z" fill="#000" />
          <path d="M1304 678l5-4 6 2-2 7-4-1z" fill="#000" />
          <circle cx="1334.500" cy="684.500" r="19.800" fill="url(#knob)" stroke="#333" strokeWidth="1" />
          <circle cx="1334.500" cy="684.500" r="18.500" fill="none" stroke="#fff" strokeWidth="1.600" />
          <path d="M1337 666l5 1-3 5zM1352 686v5l-5-3zM1327 703l5 1-1-6zM1316 677l5 3-5 3z" fill="#fff" />
        </Compass>
      </CanvasFrame>

      <StatusBar><Dots>...</Dots><span>1.0.0007</span></StatusBar>

      <Taskbar>
        <StartButton><svg width="16" height="16" viewBox="0 0 16 16"><path d="M0 2.300L6.500 1.400v6.100H0zM7.400 1.200L16 0v7.500H7.400zM0 8.400h6.500v6.200L0 13.700zM7.400 8.400H16V16l-8.600-1.200z" fill="#fff" /></svg></StartButton>
        <TaskApps>
          <TaskApp><svg width="18" height="19" viewBox="0 0 18 19"><circle cx="9" cy="10.500" r="8" fill="#ff5a2a" /><path d="M9 2.500q2-1 2-2.500 3 2 4.500 5 3 6-.5 10T6 18q6 0 7.500-5t-1.500-8q-2 0-3-2.500z" fill="#ffc52e" /><circle cx="8.500" cy="10" r="3.900" fill="#7a3fd0" /><path d="M1 6l2-3 1 2q3 0 4.500 2.500L6 9q-1 3 2 4.500-4 1-6-2z" fill="#ff8a1f" /></svg></TaskApp>
          <TaskApp $idle><svg width="18" height="19" viewBox="0 0 18 19"><rect x="1" y="3" width="16" height="11" fill="#4eb1f2" stroke="#b9dff8" strokeWidth=".8" /><path d="M1.500 13.500L12 3.500h4.500v10z" fill="#76c7f8" /><path d="M8 14h2v2h4v1.500H4V16h4z" fill="#bcd" /></svg></TaskApp>
          <TaskApp $on><svg width="18" height="19" viewBox="0 0 18 19"><rect x="1" y="2" width="16" height="16" fill="#0c0c0c" /><path d="M1 3l3 3 1-4 2 6 3 3 3-1 4-1-3 6-4 3-5-5-3-5zM1 12l4 5.500H1z" fill="#fff" /><text x="14" y="9" fontSize="9" fontWeight="700" textAnchor="middle" fill="#fff" fontFamily={UI}>6</text></svg></TaskApp>
          <TaskApp><svg width="18" height="19" viewBox="0 0 18 19"><path d="M12.500 1.500L17 3.500v13l-4.500 2L5 11.500l-3 2.500-1.500-1L4 10 .500 7 2 6l3 2.500zM12.500 6L8 10l4.500 4z" fill="#2489ca" fillRule="evenodd" /></svg></TaskApp>
          <TaskApp><svg width="18" height="19" viewBox="0 0 18 19"><path d="M1 3h6l2 2h8v11H1z" fill="#f5bd42" /><path d="M1 7h16v9H1z" fill="#ffd976" /><path d="M4 17v-6q0-1.500 1.500-1.500h7Q14 9.500 14 11v6h-2.500v-4h-5v4z" fill="#3f8fce" /></svg></TaskApp>
          <TaskApp><svg width="18" height="19" viewBox="0 0 18 19"><rect x="2" y="3" width="14" height="14" fill="#1c5fc0" /><path d="M2 17v-3l6-6 8 9z" fill="#73c8f5" /><path d="M9.500 11l2.500-2 4 4v4z" fill="#3a94e0" /><circle cx="12.500" cy="6" r="1.200" fill="#fff" /></svg></TaskApp>
        </TaskApps>
        <Tray>
          <TrayCell $w={24}><svg width="12" height="7" viewBox="0 0 12 7"><path d="M1 6l5-5 5 5" fill="none" stroke="#fff" strokeWidth="1.200" /></svg></TrayCell>
          <TrayCell $w={24}><svg width="13" height="13" viewBox="0 0 13 13"><g fill="none" stroke="#ddd"><path d="M1 12.500Q1 1 12.500 1" opacity=".6" /><path d="M4 12.500q0-8.500 8.500-8.500M7 12.500q0-5.500 5.500-5.500M10 12.500q0-2.500 2.500-2.500" /></g><circle cx="11.500" cy="11.500" r="1.300" fill="#fff" /></svg></TrayCell>
          <TrayCell $w={23}><svg width="17" height="14" viewBox="0 0 17 14"><g fill="none" stroke="#fff" strokeWidth="1.100"><path d="M1 5h2.500L7 1.500v11L3.500 9H1zM9 4.500q2 2.500 0 5M11.500 2.800q3 4.200 0 8.400M14 1q4 6 0 12" /></g></svg></TrayCell>
          <TrayCell $w={27}><svg width="16" height="14" viewBox="0 0 16 14"><path d="M4 0l4 2.500L4 5 0 2.500zM12 0l4 2.500L12 5 8 2.500zM4 5l4 2.500L4 10 0 7.500zM12 5l4 2.500L12 10 8 7.500zM8 9l4 2.400L8 14l-4-2.600z" fill="#fff" /></svg></TrayCell>
          <Clock>10:43:20<br />ter 13 out</Clock>
          <TrayCell $w={50}><svg width="16" height="16" viewBox="0 0 16 16"><path d="M0 0h16v12.500h-4.500L8 16l-1-3.500H0z" fill="#fff" /><path d="M3 3.500h10M3 6.500h10M3 9.500h6" stroke="#111" strokeWidth="1.200" /></svg></TrayCell>
          <ShowDesktop />
        </Tray>
      </Taskbar>

      <ContextMenu />

      <Ink width="1366" height="768" viewBox="0 0 1366 768">
        <g fill="none" stroke={INK} strokeWidth="5" strokeLinecap="round" strokeLinejoin="round">
          <path d="M688 161C699 149 706 136 715 121C719 150 716 174 723 199M699 203C720 206 740 204 760 205" />
          <path d="M670 215C656 256 657 320 680 414M665 400C671 405 676 410 680 415C687 413 690 406 693 399" />
          <path d="M1013 112C1028 106 1040 98 1058 96C1058 118 1038 136 1034 159C1050 157 1066 159 1085 159" />
          <path d="M1053 204C1050 254 1024 350 985 432C955 491 907 577 873 599M867 585V600C867 608 868 608 873 609L890 613" />
        </g>
      </Ink>
    </Screen>
  );
}
